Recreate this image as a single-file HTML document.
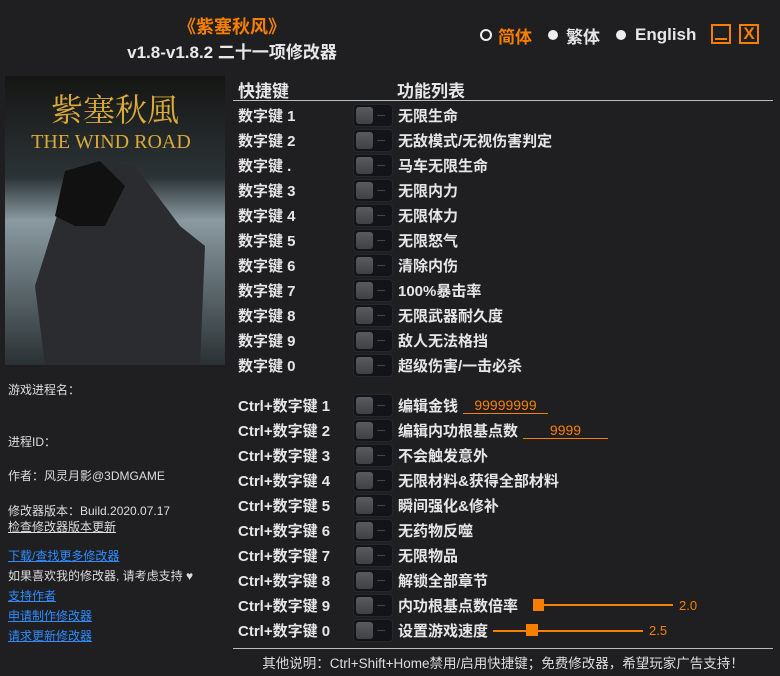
<!DOCTYPE html>
<html><head><meta charset="utf-8"><style>
*{margin:0;padding:0;box-sizing:border-box}
body{width:780px;height:676px;background:#1f1f22;color:#e6e6e6;font-family:"Liberation Sans","Noto Sans CJK SC",sans-serif;position:relative;overflow:hidden}
.a{position:absolute;white-space:nowrap}
.t1{left:0;width:464px;text-align:center;top:13px;color:#f77f00;font-size:18px;font-weight:bold}
.t2{left:0;width:464px;text-align:center;top:38px;font-size:17px;font-weight:bold;color:#e8e8e8}
.lang{top:23px;font-size:17px;font-weight:bold}
.dot{position:absolute;width:10px;height:10px;border-radius:50%;background:#eee;top:30px}
.btn{position:absolute;top:24px;width:20px;height:20px;border:2px solid #f77f00;color:#f77f00;font-weight:bold;font-size:17px;text-align:center;line-height:16px}
.hd{top:77px;font-size:17px;font-weight:bold}
.key{left:238px;font-size:15px;font-weight:bold;margin-top:-1px}
.lbl{left:398px;font-size:15px;font-weight:bold;margin-top:-1px}
.tg{position:absolute;left:353px;width:40px;height:23px;background:#131419;border:1px solid #26272c;border-radius:4px}
.tg:before{content:"";position:absolute;left:2px;top:2px;width:17px;height:17px;background:linear-gradient(#5a5b5f,#404145);border-radius:3px}
.tg:after{content:"";position:absolute;left:23px;top:10px;width:8px;height:1px;background:#444}
.side{left:8px;font-size:12px;color:#ddd}
.lk{color:#2f8cff;text-decoration:underline}
.or{color:#f77f00}
</style></head><body>
<div class="a t1">《紫塞秋风》</div>
<div class="a t2">v1.8-v1.8.2 二十一项修改器</div>
<div class="a" style="left:480px;top:29px;width:12px;height:12px;border:2px solid #eee;border-radius:50%"></div>
<div class="a lang or" style="left:498px">简体</div>
<div class="dot" style="left:548px"></div>
<div class="a lang" style="left:566px">繁体</div>
<div class="dot" style="left:616px"></div>
<div class="a lang" style="left:635px;top:25px">English</div>
<div class="btn" style="left:711px"><div style="position:absolute;left:2px;right:2px;bottom:2px;height:2px;background:#f77f00"></div></div>
<div class="btn" style="left:739px">X</div>

<svg class="a" style="left:5px;top:76px" width="220" height="289"><defs><linearGradient id="g" x1="0" y1="0" x2="0" y2="1"><stop offset="0" stop-color="#151614"/><stop offset=".35" stop-color="#2c3336"/><stop offset=".5" stop-color="#8a9aa0"/><stop offset="1" stop-color="#2a3134"/></linearGradient></defs>
<rect width="220" height="289" fill="url(#g)"/>
<path d="M40 289 L30 210 L55 130 L90 85 L130 90 L175 150 L200 170 L195 289Z" fill="#2a2c30"/>
<path d="M50 140 L60 95 L95 85 L120 110 L100 150 L70 150Z" fill="#111"/>
<text x="110" y="45" fill="#d9a93a" font-size="32" text-anchor="middle" font-family="Noto Serif CJK SC,serif">紫塞秋風</text>
<text x="106" y="72" fill="#d9a93a" font-size="20" text-anchor="middle" font-family="Liberation Serif,serif">THE WIND ROAD</text></svg>

<div class="a side" style="top:381px">游戏进程名：</div>
<div class="a side" style="top:433px">进程ID：</div>
<div class="a side" style="top:467px">作者：风灵月影@3DMGAME</div>
<div class="a side" style="top:502px">修改器版本：Build.2020.07.17</div>
<div class="a side" style="top:518px;text-decoration:underline">检查修改器版本更新</div>
<div class="a side lk" style="top:547px">下载/查找更多修改器</div>
<div class="a side" style="top:567px">如果喜欢我的修改器, 请考虑支持 ♥</div>
<div class="a side lk" style="top:587px">支持作者</div>
<div class="a side lk" style="top:607px">申请制作修改器</div>
<div class="a side lk" style="top:627px">请求更新修改器</div>

<div class="a hd" style="left:238px">快捷键</div>
<div class="a hd" style="left:397px">功能列表</div>
<div class="a" style="left:233px;top:100px;width:540px;height:1px;background:#bbb"></div>

<div class="a key" style="top:106px">数字键 1</div><div class="tg" style="top:104px"></div><div class="a lbl" style="top:106px">无限生命</div>
<div class="a key" style="top:131px">数字键 2</div><div class="tg" style="top:129px"></div><div class="a lbl" style="top:131px">无敌模式/无视伤害判定</div>
<div class="a key" style="top:156px">数字键 .</div><div class="tg" style="top:154px"></div><div class="a lbl" style="top:156px">马车无限生命</div>
<div class="a key" style="top:181px">数字键 3</div><div class="tg" style="top:179px"></div><div class="a lbl" style="top:181px">无限内力</div>
<div class="a key" style="top:206px">数字键 4</div><div class="tg" style="top:204px"></div><div class="a lbl" style="top:206px">无限体力</div>
<div class="a key" style="top:231px">数字键 5</div><div class="tg" style="top:229px"></div><div class="a lbl" style="top:231px">无限怒气</div>
<div class="a key" style="top:256px">数字键 6</div><div class="tg" style="top:254px"></div><div class="a lbl" style="top:256px">清除内伤</div>
<div class="a key" style="top:281px">数字键 7</div><div class="tg" style="top:279px"></div><div class="a lbl" style="top:281px">100%暴击率</div>
<div class="a key" style="top:306px">数字键 8</div><div class="tg" style="top:304px"></div><div class="a lbl" style="top:306px">无限武器耐久度</div>
<div class="a key" style="top:331px">数字键 9</div><div class="tg" style="top:329px"></div><div class="a lbl" style="top:331px">敌人无法格挡</div>
<div class="a key" style="top:356px">数字键 0</div><div class="tg" style="top:354px"></div><div class="a lbl" style="top:356px">超级伤害/一击必杀</div>

<div class="a key" style="top:396px">Ctrl+数字键 1</div><div class="tg" style="top:394px"></div><div class="a lbl" style="top:396px">编辑金钱</div>
<div class="a or" style="left:463px;top:397px;width:85px;border-bottom:1px solid #f77f00;text-align:center;font-size:14px;line-height:16px">99999999</div>
<div class="a key" style="top:421px">Ctrl+数字键 2</div><div class="tg" style="top:419px"></div><div class="a lbl" style="top:421px">编辑内功根基点数</div>
<div class="a or" style="left:523px;top:422px;width:85px;border-bottom:1px solid #f77f00;text-align:center;font-size:14px;line-height:16px">9999</div>
<div class="a key" style="top:446px">Ctrl+数字键 3</div><div class="tg" style="top:444px"></div><div class="a lbl" style="top:446px">不会触发意外</div>
<div class="a key" style="top:471px">Ctrl+数字键 4</div><div class="tg" style="top:469px"></div><div class="a lbl" style="top:471px">无限材料&amp;获得全部材料</div>
<div class="a key" style="top:496px">Ctrl+数字键 5</div><div class="tg" style="top:494px"></div><div class="a lbl" style="top:496px">瞬间强化&amp;修补</div>
<div class="a key" style="top:521px">Ctrl+数字键 6</div><div class="tg" style="top:519px"></div><div class="a lbl" style="top:521px">无药物反噬</div>
<div class="a key" style="top:546px">Ctrl+数字键 7</div><div class="tg" style="top:544px"></div><div class="a lbl" style="top:546px">无限物品</div>
<div class="a key" style="top:571px">Ctrl+数字键 8</div><div class="tg" style="top:569px"></div><div class="a lbl" style="top:571px">解锁全部章节</div>
<div class="a key" style="top:596px">Ctrl+数字键 9</div><div class="tg" style="top:594px"></div><div class="a lbl" style="top:596px">内功根基点数倍率</div>
<div class="a" style="left:533px;top:604px;width:140px;height:2px;background:#f77f00"></div>
<div class="a" style="left:533px;top:599px;width:11px;height:12px;background:#f77f00"></div>
<div class="a or" style="left:679px;top:598px;font-size:13px">2.0</div>
<div class="a key" style="top:621px">Ctrl+数字键 0</div><div class="tg" style="top:619px"></div><div class="a lbl" style="top:621px">设置游戏速度</div>
<div class="a" style="left:493px;top:630px;width:150px;height:2px;background:#f77f00"></div>
<div class="a" style="left:526px;top:624px;width:12px;height:12px;background:#f77f00"></div>
<div class="a or" style="left:649px;top:623px;font-size:13px">2.5</div>

<div class="a" style="left:233px;top:648px;width:540px;height:1px;background:#bbb"></div>
<div class="a" style="left:233px;width:540px;text-align:center;top:652px;font-size:13.5px;color:#ddd">其他说明：Ctrl+Shift+Home禁用/启用快捷键；免费修改器，希望玩家广告支持！</div>
</body></html>
